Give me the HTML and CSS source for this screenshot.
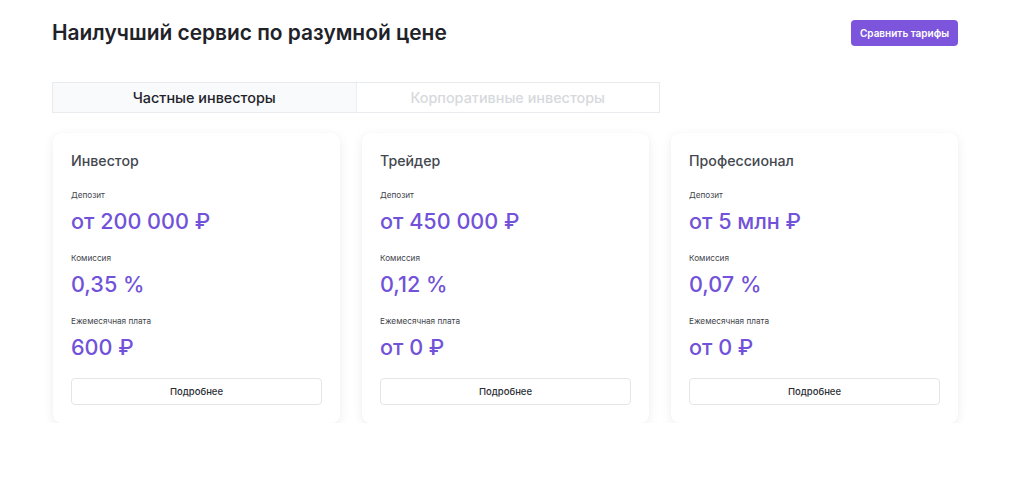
FILE: index.html
```html
<!DOCTYPE html>
<html lang="ru">
<head>
<meta charset="utf-8">
<link rel="stylesheet" href="styles.css">
</head>
<body>
<div class="page">
  <header class="head">
    <h1 class="title">Наилучший сервис по разумной цене</h1>
    <button class="compare">Сравнить тарифы</button>
  </header>
  <div class="tabs">
    <div class="tab active">Частные инвесторы</div>
    <div class="tab">Корпоративные инвесторы</div>
  </div>
  <div class="cards">
    <div class="card">
      <div class="card-title">Инвестор</div>
      <div class="label">Депозит</div>
      <div class="value">от 200 000 ₽</div>
      <div class="label">Комиссия</div>
      <div class="value">0,35 %</div>
      <div class="label">Ежемесячная плата</div>
      <div class="value">600 ₽</div>
      <button class="more">Подробнее</button>
    </div>
    <div class="card">
      <div class="card-title">Трейдер</div>
      <div class="label">Депозит</div>
      <div class="value">от 450 000 ₽</div>
      <div class="label">Комиссия</div>
      <div class="value">0,12 %</div>
      <div class="label">Ежемесячная плата</div>
      <div class="value">от 0 ₽</div>
      <button class="more">Подробнее</button>
    </div>
    <div class="card">
      <div class="card-title">Профессионал</div>
      <div class="label">Депозит</div>
      <div class="value">от 5 млн ₽</div>
      <div class="label">Комиссия</div>
      <div class="value">0,07 %</div>
      <div class="label">Ежемесячная плата</div>
      <div class="value">от 0 ₽</div>
      <button class="more">Подробнее</button>
    </div>
  </div>
</div>
</body>
</html>
```
FILE: styles.css
```css
* { box-sizing: border-box; }
html, body { margin: 0; padding: 0; background: #ffffff; }
body { font-family: Inter, "Noto Sans", sans-serif; color: #1f2329; }
.page { padding: 20px 66px 0 52px; }
.head { display: flex; justify-content: space-between; align-items: flex-start; }
.title { margin: 0; padding-top: 1px; font-size: 20.9px; font-weight: 600; line-height: 24px; color: #1f2329; letter-spacing: 0; }
.compare {
  height: 26px; width: 107px; margin: 0; padding: 0;
  background: #7c55dc; color: #fff; border: none; border-radius: 4px;
  font-family: inherit; font-size: 10px; font-weight: 600; white-space: nowrap;
}
.tabs { display: flex; width: 608px; margin-top: 36px; border: 1px solid #e8eaed; }
.tab { flex: 1; height: 29px; display: flex; align-items: center; justify-content: center; font-size: 14.4px; font-weight: 500; color: #d6d9dd; background: #fff; }
.tab.active { background: #f8fafc; color: #1f2329; border-right: 1px solid #eceef1; }
.cards { display: flex; gap: 22px; margin-top: 20px; padding-left: 1px; }
.card {
  width: 287px; padding: 18px 18px 18px 18px;
  background: #fff; border-radius: 8px;
  box-shadow: 0 3px 12px rgba(20, 30, 50, 0.07), 0 0 1px rgba(20,30,50,0.06);
  display: flex; flex-direction: column;
}
.card-title { font-size: 14.2px; font-weight: 500; color: #43484f; line-height: 18px; margin-top: 1px; }
.label { font-size: 8.2px; color: #3f444b; margin-top: 19.5px; line-height: 11px; }
.value { font-size: 21.6px; font-weight: 500; color: #7152d8; line-height: 26px; margin-top: 6.5px; }
.card-title + .label { margin-top: 20px; }
.more {
  margin-top: 18px; height: 27px; width: 251px;
  background: #fff; border: 1px solid #e3e5e8; border-radius: 4px;
  font-family: inherit; font-size: 9.5px; font-weight: 500; color: #2b2f35;
}
```
